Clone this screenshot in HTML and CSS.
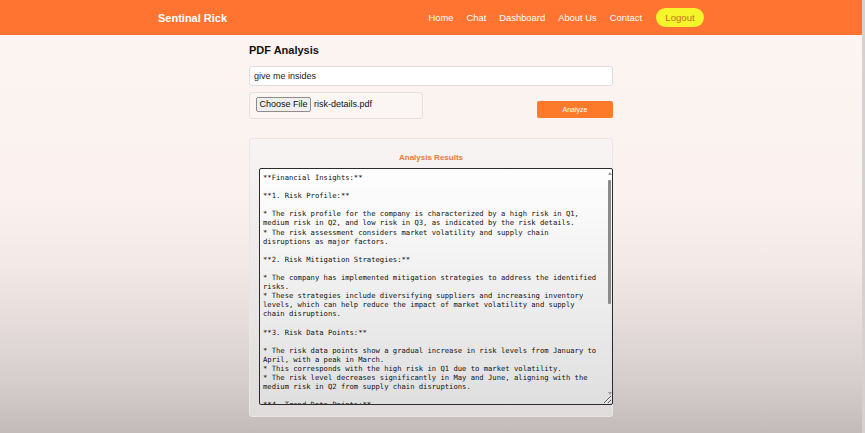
FILE: index.html
```html
<!DOCTYPE html>
<html lang="en">
<head>
<meta charset="utf-8">
<title>Sentinal Rick – PDF Analysis</title>
<link rel="stylesheet" href="styles.css">
</head>
<body>
<header class="topbar">
  <div class="topbar-inner">
    <a class="brand" href="#">Sentinal Rick</a>
    <nav class="nav">
      <a href="#">Home</a>
      <a href="#">Chat</a>
      <a href="#">Dashboard</a>
      <a href="#">About Us</a>
      <a href="#">Contact</a>
      <button class="logout" type="button">Logout</button>
    </nav>
  </div>
</header>
<main class="page">
  <h2 class="title">PDF Analysis</h2>
  <input class="query" type="text" value="give me insides">
  <div class="upload-row">
    <div class="file-box">
      <span class="file-btn">Choose File</span>
      <span class="file-name">risk-details.pdf</span>
    </div>
    <button class="analyze" type="button">Analyze</button>
  </div>
  <section class="results">
    <h3 class="results-title">Analysis Results</h3>
    <div class="text-wrap">
      <textarea class="results-text" readonly>**Financial Insights:**

**1. Risk Profile:**

* The risk profile for the company is characterized by a high risk in Q1,
medium risk in Q2, and low risk in Q3, as indicated by the risk details.
* The risk assessment considers market volatility and supply chain
disruptions as major factors.

**2. Risk Mitigation Strategies:**

* The company has implemented mitigation strategies to address the identified
risks.
* These strategies include diversifying suppliers and increasing inventory
levels, which can help reduce the impact of market volatility and supply
chain disruptions.

**3. Risk Data Points:**

* The risk data points show a gradual increase in risk levels from January to
April, with a peak in March.
* This corresponds with the high risk in Q1 due to market volatility.
* The risk level decreases significantly in May and June, aligning with the
medium risk in Q2 from supply chain disruptions.

**4. Trend Data Points:**

* The trend data points indicate a steady rise in overall risk exposure over
the first quarter, followed by a gradual decline.
* This trend suggests that the mitigation strategies are having a positive
effect on reducing risk levels.

**5. Recommendations:**

* Continue monitoring market volatility and adjust inventory levels
accordingly.
* Strengthen relationships with diversified suppliers to further reduce the
impact of supply chain disruptions.
* Review the risk profile quarterly to ensure that mitigation strategies
remain effective.

**Conclusion:**

The company has a moderate overall risk profile, with risk levels decreasing
over time as mitigation strategies take effect.</textarea>
      <span class="sb-up"></span>
      <span class="sb-thumb"></span>
      <span class="sb-down"></span>
    </div>
  </section>
</main>
</body>
</html>
```

FILE: styles.css
```css
html {
  height: 100%;
  background: linear-gradient(to bottom, #fdf5f3 0%, #fbf2f0 45%, #f2e9e7 62%, #e3dad9 76%, #d6cecc 88%, #c3bbb9 100%);
}

body {
  box-sizing: border-box;
  margin: 0;
  min-height: 100%;
  border-right: 3px solid #d4d1d1;
  font-family: "Liberation Sans", Arial, sans-serif;
  color: #111;
}

.topbar {
  height: 35px;
  background: #fe7430;
}

.topbar-inner {
  width: 546px;
  height: 100%;
  margin: 0 auto;
  display: flex;
  align-items: center;
  justify-content: space-between;
}

.brand {
  color: #fff;
  font-size: 11px;
  font-weight: bold;
  text-decoration: none;
}

.nav {
  display: flex;
  align-items: center;
  gap: 13px;
}

.nav a {
  color: #fff;
  font-size: 9.4px;
  text-decoration: none;
}

.logout {
  width: 48px;
  height: 19px;
  margin-left: 1px;
  padding: 0;
  border: none;
  border-radius: 10px;
  background: #f6f52c;
  color: #c9731a;
  font-family: inherit;
  font-size: 9.6px;
}

.page {
  width: 364px;
  margin: 0 auto;
  padding-top: 9px;
}

.title {
  margin: 0 0 9px;
  font-size: 11px;
  line-height: 13px;
  font-weight: bold;
  color: #111;
}

.query {
  display: block;
  box-sizing: border-box;
  width: 100%;
  height: 20px;
  margin: 0;
  padding: 0 4px;
  border: 1px solid #e0dcdc;
  border-radius: 3px;
  background: #fff;
  font-family: inherit;
  font-size: 9px;
  color: #222;
  outline: none;
}

.upload-row {
  display: flex;
  justify-content: space-between;
  align-items: flex-end;
  margin-top: 6px;
}

.file-box {
  box-sizing: border-box;
  width: 174px;
  height: 27px;
  padding: 4px 6px;
  border: 1px solid #e6e0de;
  border-radius: 3px;
  background: #fbf5f3;
  display: flex;
  align-items: flex-start;
  gap: 3px;
}

.file-btn {
  box-sizing: border-box;
  height: 15px;
  padding: 0 2.5px;
  line-height: 13px;
  border: 1px solid #8d8d8d;
  border-radius: 2px;
  background: #efefef;
  font-size: 9px;
  color: #111;
}

.file-name {
  font-size: 9px;
  line-height: 15px;
  color: #111;
}

.analyze {
  width: 76px;
  height: 17px;
  margin-bottom: 1px;
  padding: 0;
  border: none;
  border-radius: 2px;
  background: #fd7a2b;
  color: #fff;
  font-family: inherit;
  font-size: 7px;
}

.results {
  box-sizing: border-box;
  height: 279px;
  margin-top: 19px;
  padding-top: 14px;
  border: 1px solid #ebe6e5;
  border-radius: 3px;
  background: linear-gradient(to bottom, #f7f4f3, #e0dcdb);
}

.results-title {
  margin: 0 0 5px;
  text-align: center;
  font-size: 8px;
  line-height: 10px;
  font-weight: bold;
  color: #e97b3d;
}

.text-wrap {
  position: relative;
  width: 354px;
  height: 237px;
  margin-left: 9px;
}

.results-text {
  display: block;
  box-sizing: border-box;
  width: 100%;
  height: 100%;
  margin: 0;
  padding: 4px 8px 3px 3px;
  border: 1px solid #2b2b2b;
  border-radius: 2px;
  background: linear-gradient(to bottom, #ffffff, #dfdfdf);
  font-family: "DejaVu Sans Mono", "Liberation Mono", monospace;
  font-size: 7.2px;
  line-height: 9.1px;
  color: #111;
  overflow-y: scroll;
  resize: both;
  outline: none;
}

.sb-thumb {
  position: absolute;
  right: 2px;
  top: 12px;
  width: 3px;
  height: 124px;
  border-radius: 1px;
  background: #8b8b8b;
}

.sb-up,
.sb-down {
  position: absolute;
  right: 1px;
  width: 0;
  height: 0;
  border-left: 2.5px solid transparent;
  border-right: 2.5px solid transparent;
}

.sb-up {
  top: 4px;
  border-bottom: 3px solid #9a9a9a;
}

.sb-down {
  bottom: 10px;
  border-top: 3px solid #9a9a9a;
}
```
